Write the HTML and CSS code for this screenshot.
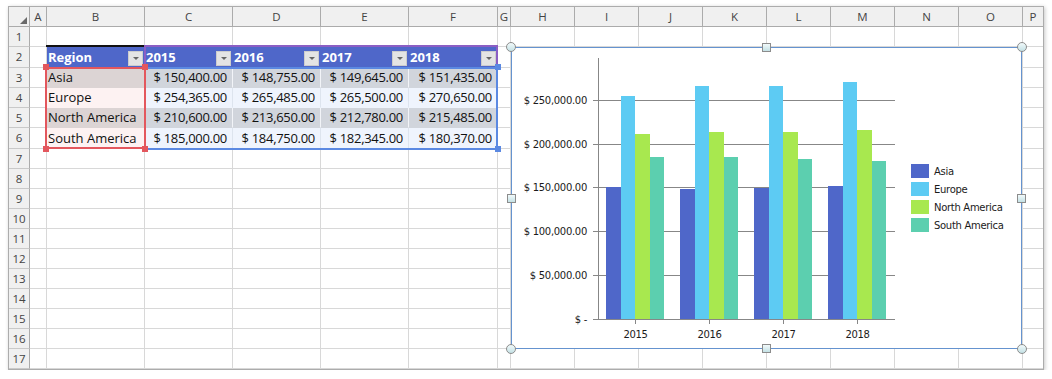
FILE: index.html
```html
<!DOCTYPE html>
<html lang="en">
<head>
    <meta charset="UTF-8">
    <title>Spreadsheet - Chart</title>
    <link rel="stylesheet" href="styles.css">
</head>
<body>

    <!-- Hoja de cálculo -->
    <div id="sheet" class="sheet">
        <div class="row head">
            <div class="corner"><svg width="20" height="19"><polygon points="18,10 18,17 11,17" fill="#6a6a6a"/></svg></div>
            <div class="ch">A</div><div class="ch">B</div><div class="ch">C</div><div class="ch">D</div>
            <div class="ch">E</div><div class="ch">F</div><div class="ch">G</div><div class="ch">H</div>
            <div class="ch">I</div><div class="ch">J</div><div class="ch">K</div><div class="ch">L</div>
            <div class="ch">M</div><div class="ch">N</div><div class="ch">O</div><div class="ch last">P</div>
        </div>

        <div class="row">
            <div class="rh">1</div>
            <div class="c"></div><div class="c"></div><div class="c"></div><div class="c"></div><div class="c"></div><div class="c"></div><div class="c"></div>
            <div class="c"></div><div class="c"></div><div class="c"></div><div class="c"></div><div class="c"></div><div class="c"></div><div class="c"></div><div class="c"></div>
            <div class="c last"></div>
        </div>

        <!-- Encabezado de la tabla -->
        <div class="row tall">
            <div class="rh">2</div>
            <div class="c"></div>
            <div class="c th"><span>Region</span><i class="dd"></i></div>
            <div class="c th"><span>2015</span><i class="dd"></i></div>
            <div class="c th"><span>2016</span><i class="dd"></i></div>
            <div class="c th"><span>2017</span><i class="dd"></i></div>
            <div class="c th"><span>2018</span><i class="dd"></i></div>
            <div class="c"></div>
            <div class="c"></div><div class="c"></div><div class="c"></div><div class="c"></div><div class="c"></div><div class="c"></div><div class="c"></div><div class="c"></div>
            <div class="c last"></div>
        </div>

        <div class="row band">
            <div class="rh">3</div>
            <div class="c"></div>
            <div class="c td name">Asia</div>
            <div class="c td num">$ 150,400.00</div>
            <div class="c td num">$ 148,755.00</div>
            <div class="c td num">$ 149,645.00</div>
            <div class="c td num">$ 151,435.00</div>
            <div class="c"></div>
            <div class="c"></div><div class="c"></div><div class="c"></div><div class="c"></div><div class="c"></div><div class="c"></div><div class="c"></div><div class="c"></div>
            <div class="c last"></div>
        </div>

        <div class="row plain">
            <div class="rh">4</div>
            <div class="c"></div>
            <div class="c td name">Europe</div>
            <div class="c td num">$ 254,365.00</div>
            <div class="c td num">$ 265,485.00</div>
            <div class="c td num">$ 265,500.00</div>
            <div class="c td num">$ 270,650.00</div>
            <div class="c"></div>
            <div class="c"></div><div class="c"></div><div class="c"></div><div class="c"></div><div class="c"></div><div class="c"></div><div class="c"></div><div class="c"></div>
            <div class="c last"></div>
        </div>

        <div class="row band">
            <div class="rh">5</div>
            <div class="c"></div>
            <div class="c td name">North America</div>
            <div class="c td num">$ 210,600.00</div>
            <div class="c td num">$ 213,650.00</div>
            <div class="c td num">$ 212,780.00</div>
            <div class="c td num">$ 215,485.00</div>
            <div class="c"></div>
            <div class="c"></div><div class="c"></div><div class="c"></div><div class="c"></div><div class="c"></div><div class="c"></div><div class="c"></div><div class="c"></div>
            <div class="c last"></div>
        </div>

        <div class="row plain tall">
            <div class="rh">6</div>
            <div class="c"></div>
            <div class="c td name">South America</div>
            <div class="c td num">$ 185,000.00</div>
            <div class="c td num">$ 184,750.00</div>
            <div class="c td num">$ 182,345.00</div>
            <div class="c td num">$ 180,370.00</div>
            <div class="c"></div>
            <div class="c"></div><div class="c"></div><div class="c"></div><div class="c"></div><div class="c"></div><div class="c"></div><div class="c"></div><div class="c"></div>
            <div class="c last"></div>
        </div>

        <!-- Rangos resaltados -->
        <div class="table-top"></div>
        <div class="range rng-purple"></div>
        <div class="range rng-blue"></div>
        <div class="range rng-red"></div>
        <i class="grip red" style="left:34px; top:57px"></i>
        <i class="grip red" style="left:133px; top:57px"></i>
        <i class="grip red" style="left:34px; top:139px"></i>
        <i class="grip red" style="left:133px; top:139px"></i>
        <i class="grip blue" style="left:486px; top:57px"></i>
        <i class="grip blue" style="left:486px; top:139px"></i>

        <!-- Gráfico -->
        <div class="chart">
            <svg class="plot" width="511" height="302" viewBox="0 0 511 302">
                <rect x="0.5" y="0.5" width="510" height="301" fill="#fff" stroke="#6593cf"/>

                <g stroke="#878787" shape-rendering="crispEdges">
                    <line x1="82" y1="53.5" x2="384" y2="53.5"/>
                    <line x1="82" y1="97.5" x2="384" y2="97.5"/>
                    <line x1="82" y1="140.5" x2="384" y2="140.5"/>
                    <line x1="82" y1="184.5" x2="384" y2="184.5"/>
                    <line x1="82" y1="228.5" x2="384" y2="228.5"/>
                </g>

                <g shape-rendering="crispEdges">
                    <rect x="95" y="140.1" width="14.5" height="131.9" fill="#4f67c9"/>
                    <rect x="109.5" y="48.9" width="14.5" height="223.1" fill="#5dcbf3"/>
                    <rect x="124" y="87.3" width="14.5" height="184.7" fill="#a8e84f"/>
                    <rect x="138.5" y="109.7" width="14.5" height="162.3" fill="#5ccfaf"/>

                    <rect x="169" y="141.5" width="14.5" height="130.5" fill="#4f67c9"/>
                    <rect x="183.5" y="39.1" width="14.5" height="232.9" fill="#5dcbf3"/>
                    <rect x="198" y="84.6" width="14.5" height="187.4" fill="#a8e84f"/>
                    <rect x="212.5" y="109.9" width="14.5" height="162.1" fill="#5ccfaf"/>

                    <rect x="243" y="140.7" width="14.5" height="131.3" fill="#4f67c9"/>
                    <rect x="257.5" y="39.1" width="14.5" height="232.9" fill="#5dcbf3"/>
                    <rect x="272" y="85.3" width="14.5" height="186.7" fill="#a8e84f"/>
                    <rect x="286.5" y="112" width="14.5" height="160" fill="#5ccfaf"/>

                    <rect x="317" y="139.2" width="14.5" height="132.8" fill="#4f67c9"/>
                    <rect x="331.5" y="34.6" width="14.5" height="237.4" fill="#5dcbf3"/>
                    <rect x="346" y="83" width="14.5" height="189" fill="#a8e84f"/>
                    <rect x="360.5" y="113.8" width="14.5" height="158.2" fill="#5ccfaf"/>
                </g>

                <g stroke="#878787" shape-rendering="crispEdges">
                    <line x1="87.5" y1="11" x2="87.5" y2="273"/>
                    <line x1="82" y1="272.5" x2="384" y2="272.5"/>
                    <line x1="124.5" y1="272" x2="124.5" y2="277"/>
                    <line x1="198.5" y1="272" x2="198.5" y2="277"/>
                    <line x1="272.5" y1="272" x2="272.5" y2="277"/>
                    <line x1="346.5" y1="272" x2="346.5" y2="277"/>
                </g>

                <g class="ylab" text-anchor="end">
                    <text x="76" y="57">$ 250,000.00</text>
                    <text x="76" y="101">$ 200,000.00</text>
                    <text x="76" y="144">$ 150,000.00</text>
                    <text x="76" y="188">$ 100,000.00</text>
                    <text x="76" y="232">$ 50,000.00</text>
                    <text x="76" y="276">$ -</text>
                </g>

                <g class="xlab" text-anchor="middle">
                    <text x="124.5" y="291">2015</text>
                    <text x="198.5" y="291">2016</text>
                    <text x="272.5" y="291">2017</text>
                    <text x="346.5" y="291">2018</text>
                </g>

                <g class="legend">
                    <rect x="400" y="117" width="18" height="14" fill="#4f67c9"/>
                    <rect x="400" y="135" width="18" height="14" fill="#5dcbf3"/>
                    <rect x="400" y="153" width="18" height="14" fill="#a8e84f"/>
                    <rect x="400" y="171" width="18" height="14" fill="#5ccfaf"/>
                    <text x="423" y="128">Asia</text>
                    <text x="423" y="146">Europe</text>
                    <text x="423" y="164">North America</text>
                    <text x="423" y="182">South America</text>
                </g>
            </svg>

            <!-- Tiradores de selección -->
            <i class="hd round tl"></i>
            <i class="hd round tr"></i>
            <i class="hd round bl"></i>
            <i class="hd round br"></i>
            <i class="hd sq tm"></i>
            <i class="hd sq bm"></i>
            <i class="hd sq ml"></i>
            <i class="hd sq mr"></i>
        </div>
    </div>

    <script>
        // Filas vacías 7 a 17
        var sheet = document.getElementById('sheet');
        var chart = sheet.querySelector('.table-top');
        for (var r = 7; r <= 17; r++) {
            var row = document.createElement('div');
            row.className = 'row';
            var html = '<div class="rh">' + r + '</div>';
            for (var c = 0; c < 15; c++) {
                html += '<div class="c"></div>';
            }
            html += '<div class="c last"></div>';
            row.innerHTML = html;
            sheet.insertBefore(row, chart);
        }
    </script>
</body>
</html>
```

FILE: styles.css
```css
/* Estilos generales */
body {
    margin: 0;
    background-color: #ffffff;
    font-family: "Open Sans", "Noto Sans", sans-serif;
}

/* Contenedor de la hoja */
.sheet {
    position: relative;
    width: max-content;
    margin: 6px 0 0 8px;
    border: 1px solid #acacac;
    background-color: #ffffff;
    box-shadow: 1px 1px 4px rgba(0, 0, 0, 0.22);
}

.row {
    display: grid;
    grid-template-columns: 21px 17px 98px 88px 88px 88px 89px 13px repeat(8, 64px) 20px;
    height: 20px;
}

.row.tall {
    height: 21px;
}

.row > div {
    box-sizing: border-box;
}

/* Encabezados */
.corner,
.ch {
    background-color: #f0f0f0;
    border-right: 1px solid #ababab;
    border-bottom: 1px solid #ababab;
}

.ch {
    font-size: 11.5px;
    line-height: 19px;
    color: #444;
    text-align: center;
}

.ch.last {
    border-right: none;
}

.corner svg {
    display: block;
}

.rh {
    background-color: #f0f0f0;
    border-right: 1px solid #ababab;
    border-bottom: 1px solid #c9c9c9;
    font-size: 11.5px;
    line-height: 19px;
    color: #444;
    text-align: center;
}

/* Celdas */
.c {
    border-right: 1px solid #d8d8d8;
    border-bottom: 1px solid #d8d8d8;
}

.c.last {
    border-right: none;
}

/* Tabla */
.th,
.td {
    display: flex;
    align-items: flex-end;
    font-size: 13px;
    line-height: 17px;
    padding-bottom: 1px;
    white-space: nowrap;
}

.th {
    background-color: #4f67c9;
    border-right-color: #4f67c9;
    border-bottom-color: transparent;
    color: #ffffff;
    font-weight: bold;
    padding-left: 1px;
    padding-right: 1px;
}

.th span {
    flex: 1;
}

.dd {
    position: relative;
    width: 15px;
    height: 15px;
    box-sizing: border-box;
    background-color: #e4e4e4;
    border: 1px solid #cdcdcd;
}

.dd::after {
    content: "";
    position: absolute;
    left: 4px;
    top: 5px;
    border-left: 3px solid transparent;
    border-right: 3px solid transparent;
    border-top: 3px solid #666;
}

.td {
    color: #111;
    border-bottom-color: transparent;
}

.name {
    padding-left: 1px;
}

.num {
    justify-content: flex-end;
    padding-right: 5px;
    letter-spacing: -0.3px;
}

.band .name {
    background-color: #dcd4d4;
    border-right-color: #f2f2f2;
}

.band .num {
    background-color: #d1d5dc;
    border-right-color: #f2f4f8;
}

.plain .name {
    background-color: #fdf2f2;
}

.plain .num {
    background-color: #eff4fd;
    border-right-color: #dde4ee;
}

/* Rangos resaltados */
.table-top {
    position: absolute;
    left: 37px;
    top: 38px;
    width: 98px;
    height: 2px;
    background-color: #111;
}

.range {
    position: absolute;
    box-sizing: border-box;
    border: 2px solid;
}

.rng-purple {
    left: 135px;
    top: 38px;
    width: 354px;
    height: 24px;
    border-color: #8b5ec4;
}

.rng-blue {
    left: 135px;
    top: 60px;
    width: 354px;
    height: 83px;
    border-color: #5b89e2;
}

.rng-red {
    left: 36px;
    top: 60px;
    width: 101px;
    height: 82px;
    border-color: #e3575d;
}

.grip {
    position: absolute;
    width: 6px;
    height: 6px;
}

.grip.red {
    background-color: #e3575d;
}

.grip.blue {
    background-color: #5b89e2;
}

/* Gráfico */
.chart {
    position: absolute;
    left: 502px;
    top: 40px;
    width: 511px;
    height: 302px;
}

.plot {
    display: block;
}

.plot text {
    font-family: "DejaVu Sans", sans-serif;
    font-size: 10px;
    letter-spacing: -0.3px;
    fill: #1b1b1b;
}

.hd {
    position: absolute;
    box-sizing: border-box;
    border: 1px solid #8c8c8c;
    background: linear-gradient(#f2fafb, #c4e1e5);
}

.hd.round {
    width: 10px;
    height: 10px;
    border-radius: 50%;
}

.hd.sq {
    width: 9px;
    height: 9px;
}

.tl { left: -5px; top: -5px; }
.tr { right: -5px; top: -5px; }
.bl { left: -5px; bottom: -5px; }
.br { right: -5px; bottom: -5px; }
.tm { left: 251px; top: -4px; }
.bm { left: 251px; bottom: -4px; }
.ml { left: -4px; top: 147px; }
.mr { right: -4px; top: 147px; }
```
